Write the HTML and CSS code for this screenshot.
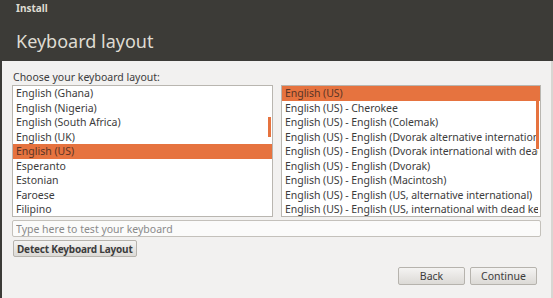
FILE: index.html
```html
<!DOCTYPE html>
<html lang="en">
<head>
  <meta charset="UTF-8">
  <title>Install</title>
  <link rel="stylesheet" href="styles.css">
</head>
<body>

  <div class="window">
    <div class="header">
      <div class="wm-title">Install</div>
      <h1>Keyboard layout</h1>
    </div>

    <div class="content">
      <div class="label">Choose your keyboard layout:</div>

      <div class="lists">
        <div class="list">
          <div class="row">English (Ghana)</div>
          <div class="row">English (Nigeria)</div>
          <div class="row">English (South Africa)</div>
          <div class="row">English (UK)</div>
          <div class="row selected">English (US)</div>
          <div class="row">Esperanto</div>
          <div class="row">Estonian</div>
          <div class="row">Faroese</div>
          <div class="row">Filipino</div>
          <div class="scroll left-scroll"></div>
        </div>

        <div class="list variants">
          <div class="row selected">English (US)</div>
          <div class="row">English (US) - Cherokee</div>
          <div class="row">English (US) - English (Colemak)</div>
          <div class="row">English (US) - English (Dvorak alternative international no dead keys)</div>
          <div class="row">English (US) - English (Dvorak international with dead keys)</div>
          <div class="row">English (US) - English (Dvorak)</div>
          <div class="row">English (US) - English (Macintosh)</div>
          <div class="row">English (US) - English (US, alternative international)</div>
          <div class="row">English (US) - English (US, international with dead keys)</div>
          <div class="scroll right-scroll"></div>
        </div>
      </div>

      <input class="test-input" type="text" placeholder="Type here to test your keyboard">

      <div class="detect-row">
        <button class="btn detect">Detect Keyboard Layout</button>
      </div>

      <div class="footer">
        <button class="btn">Back</button>
        <button class="btn">Continue</button>
      </div>
    </div>
  </div>

</body>
</html>
```

FILE: styles.css
```css
body {
  margin: 0;
  font-family: 'Noto Sans', 'DejaVu Sans', sans-serif;
  font-size: 10.5px;
  color: #3c3c3c;
  background: #f2f1f0;
}

.window {
  width: 553px;
  height: 298px;
  display: flex;
  flex-direction: column;
  border-left: 2px solid #3c3b37;
  box-sizing: border-box;
}

.header {
  background: #3c3b37;
  height: 61px;
  box-sizing: border-box;
  padding: 2px 0 0 14px;
  color: #dfdbd2;
}

.wm-title {
  font-weight: bold;
  font-size: 10px;
  line-height: 12px;
}

h1 {
  margin: 16px 0 0 0;
  font-weight: normal;
  font-size: 18px;
  line-height: 22px;
}

.content {
  flex: 1;
  padding: 10px 10px 0 10px;
  border-right: 2px solid #d8d6d2;
}

.label {
  line-height: 12px;
  margin-bottom: 2px;
  padding-left: 1px;
}

.lists {
  display: flex;
  gap: 8px;
}

.list {
  position: relative;
  width: 261px;
  height: 132px;
  box-sizing: border-box;
  background: #fff;
  border: 1px solid #b9b6b0;
  overflow: hidden;
}

.list.variants {
  width: 260px;
}

.row {
  height: 14.5px;
  line-height: 14.5px;
  padding-left: 3px;
  white-space: nowrap;
  overflow: hidden;
  margin-right: 2px;
}

.variants .row {
  letter-spacing: -0.05px;
}

.row.selected {
  background: #e6733f;
  color: #5a3526;
  margin-right: 0;
}

.scroll {
  position: absolute;
  right: 1px;
  width: 3px;
  background: #e6733f;
}

.left-scroll {
  top: 31px;
  height: 20px;
}

.right-scroll {
  top: 0;
  height: 63px;
}

.test-input {
  display: block;
  width: 100%;
  height: 17px;
  margin-top: 3px;
  box-sizing: border-box;
  border: 1px solid #c4c1bb;
  border-radius: 2px;
  background: #fbfbfa;
  font-family: inherit;
  font-size: 10.5px;
  padding: 0 3px;
  color: #3c3c3c;
}

.test-input::placeholder {
  color: #8a8a8a;
}

.detect-row {
  margin-top: 3px;
}

.btn {
  height: 17px;
  box-sizing: border-box;
  border: 1px solid #b6b3ad;
  border-radius: 2px;
  background: linear-gradient(to bottom, #f4f3f2, #dcdad6);
  font-family: inherit;
  font-size: 10.5px;
  color: #3c3c3c;
  padding: 0 4px;
  white-space: nowrap;
  cursor: pointer;
}

.detect {
  font-weight: bold;
  font-size: 10px;
  letter-spacing: -0.2px;
  padding: 0 3px;
  margin-left: 1px;
}

.footer {
  display: flex;
  justify-content: flex-end;
  gap: 5px;
  margin-top: 10px;
  padding-right: 4px;
}

.footer .btn {
  width: 67px;
  height: 18px;
}
```
